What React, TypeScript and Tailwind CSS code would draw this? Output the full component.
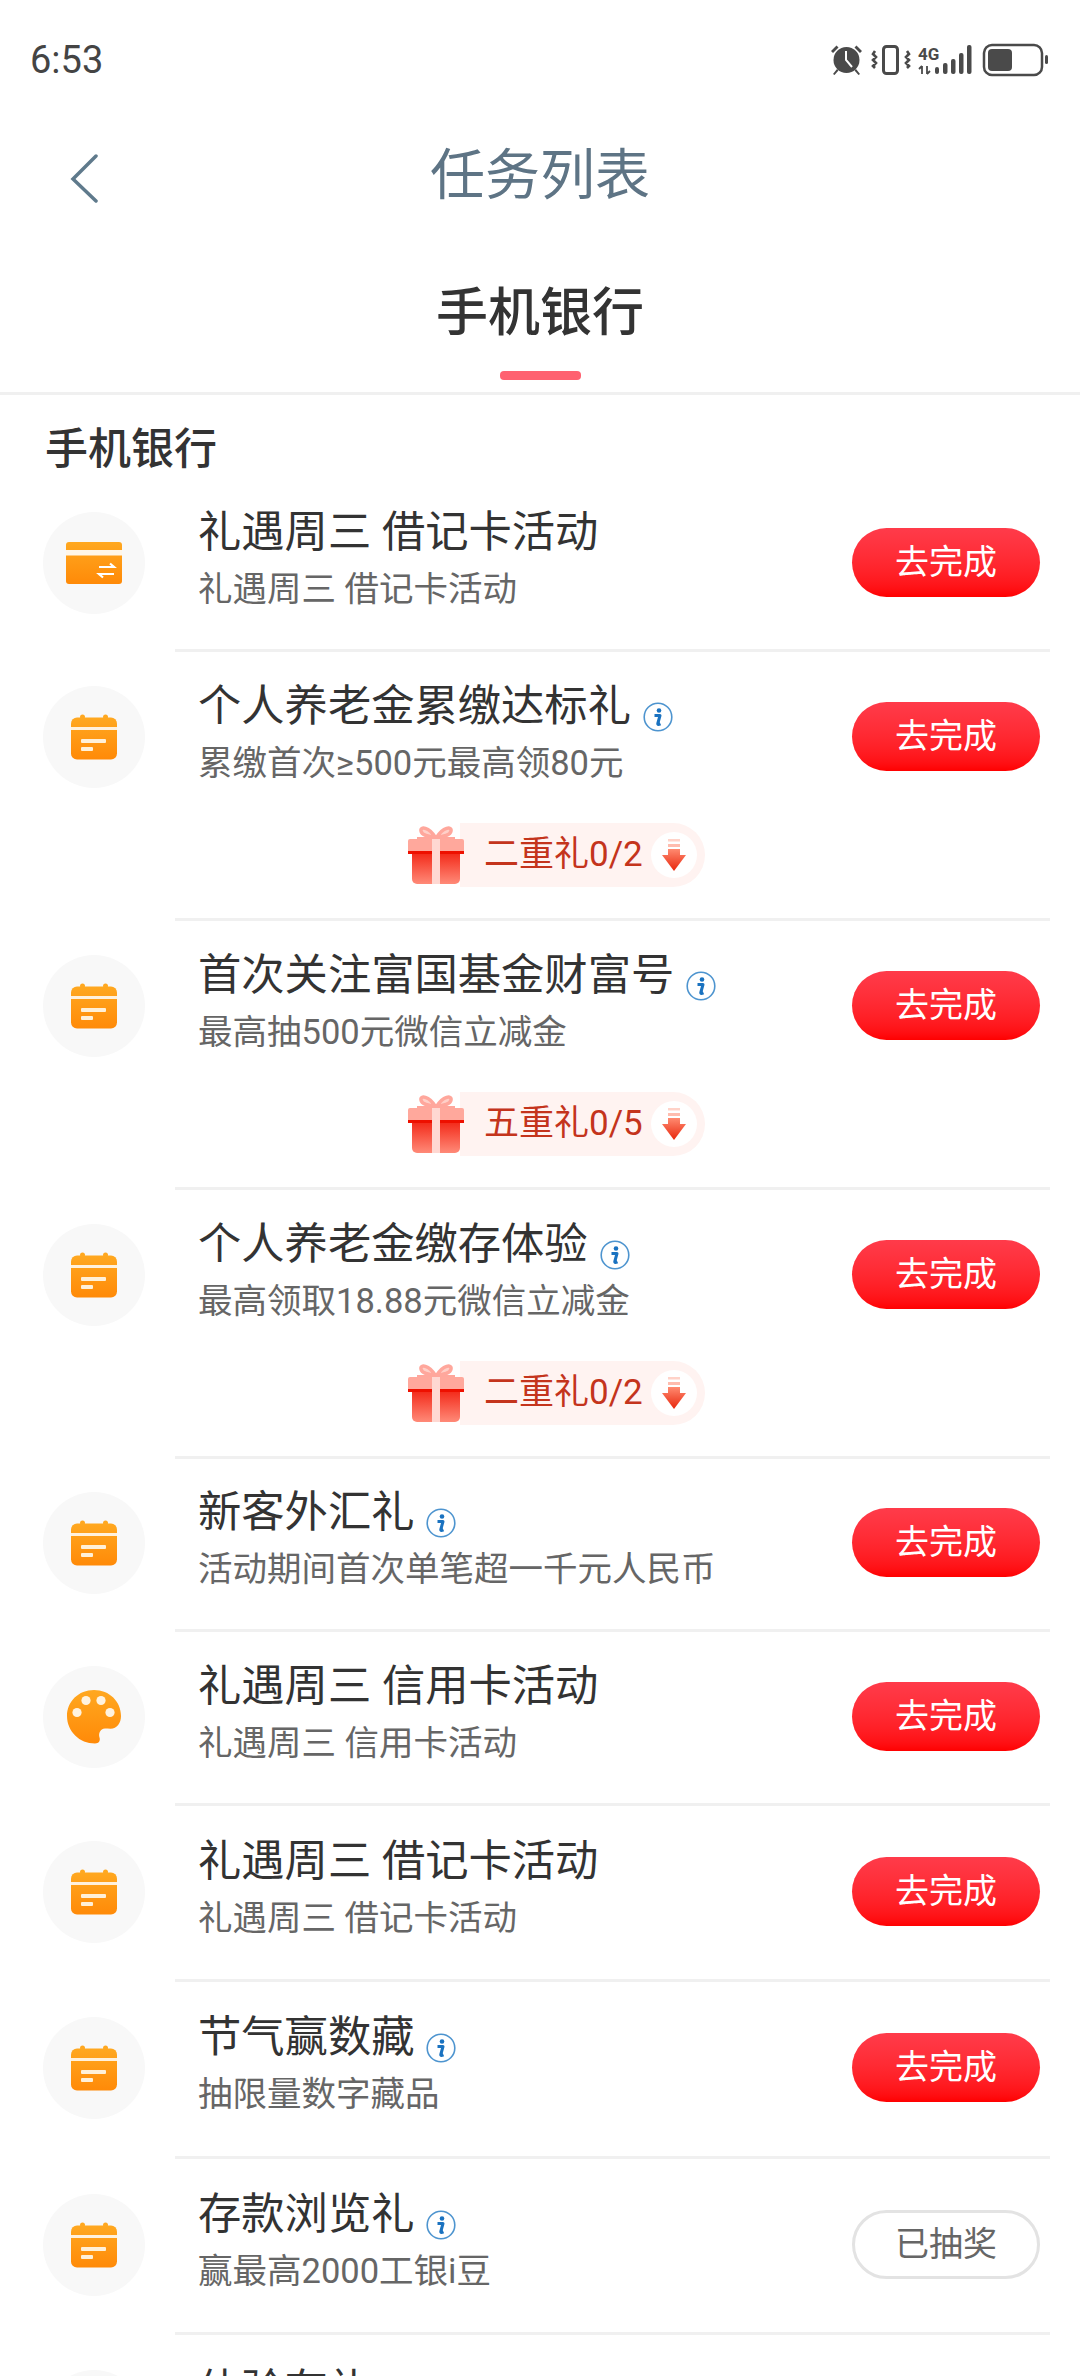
import React from "react";

type Row = {
  icon: "card" | "cal" | "palette";
  title: string;
  sub: string;
  info?: boolean;
  reward?: string;
  done?: boolean;
  h: string;
};

const rows: Row[] = [
  { icon: "card", title: "礼遇周三 借记卡活动", sub: "礼遇周三 借记卡活动", h: "h-[171px]" },
  { icon: "cal", title: "个人养老金累缴达标礼", sub: "累缴首次≥500元最高领80元", info: true, reward: "二重礼0/2", h: "h-[172px]" },
  { icon: "cal", title: "首次关注富国基金财富号", sub: "最高抽500元微信立减金", info: true, reward: "五重礼0/5", h: "h-[172px]" },
  { icon: "cal", title: "个人养老金缴存体验", sub: "最高领取18.88元微信立减金", info: true, reward: "二重礼0/2", h: "h-[172px]" },
  { icon: "cal", title: "新客外汇礼", sub: "活动期间首次单笔超一千元人民币", info: true, h: "h-[170px]" },
  { icon: "palette", title: "礼遇周三 信用卡活动", sub: "礼遇周三 信用卡活动", h: "h-[171px]" },
  { icon: "cal", title: "礼遇周三 借记卡活动", sub: "礼遇周三 借记卡活动", h: "h-[173px]" },
  { icon: "cal", title: "节气赢数藏", sub: "抽限量数字藏品", info: true, h: "h-[174px]" },
  { icon: "cal", title: "存款浏览礼", sub: "赢最高2000工银i豆", info: true, done: true, h: "h-[173px]" },
  { icon: "cal", title: "体验存礼", sub: "体验存礼", h: "h-[173px]" },
];

function Grad({ id }: { id: string }) {
  return (
    <defs>
      <linearGradient id={id} x1="0" y1="0" x2="0" y2="1">
        <stop offset="0" stopColor="#ffa820" />
        <stop offset="1" stopColor="#ff8a08" />
      </linearGradient>
    </defs>
  );
}

function TaskIcon({ kind, id }: { kind: Row["icon"]; id: string }) {
  if (kind === "card") {
    return (
      <svg width="56" height="44" viewBox="0 0 56 44">
        <Grad id={id} />
        <rect x="0" y="1" width="56" height="42" rx="3" fill={`url(#${id})`} />
        <rect x="0" y="9" width="56" height="5.5" fill="#ffffff" opacity="0.9" />
        <path d="M33 26h15l-4-3.5M48 33H33l4 3.5" fill="none" stroke="#fff" strokeWidth="2.2" />
      </svg>
    );
  }
  if (kind === "palette") {
    return (
      <svg width="56" height="56" viewBox="0 0 56 56">
        <Grad id={id} />
        <path
          d="M28 1C12.500 1 1 12.500 1 27c0 15.500 12.500 27.500 28 27.500 4 0 5.500-3 4.500-6-1.200-4 .5-8.500 5.500-9 2 0 3.500.2 5.500.2C51 39.700 55 34 55 27 55 12.500 43.500 1 28 1z"
          fill={`url(#${id})`}
        />
        <circle cx="20" cy="11.500" r="4.600" fill="#fff3df" />
        <circle cx="35" cy="11.500" r="4.600" fill="#fff3df" />
        <circle cx="11" cy="23.500" r="4.600" fill="#fff3df" />
        <circle cx="44" cy="23.500" r="4.600" fill="#fff3df" />
      </svg>
    );
  }
  return (
    <svg width="46" height="46" viewBox="0 0 46 46">
      <Grad id={id} />
      <circle cx="11.500" cy="3" r="2.500" fill="#ffa820" />
      <circle cx="34.500" cy="3" r="2.500" fill="#ffa820" />
      <rect x="0" y="3.500" width="46" height="42" rx="6" fill={`url(#${id})`} />
      <rect x="0" y="13" width="46" height="3" fill="#fff" opacity="0.85" />
      <rect x="10" y="25" width="25" height="4" rx="1" fill="#fff0d8" />
      <rect x="10" y="33" width="12" height="4" rx="1" fill="#fff0d8" />
    </svg>
  );
}

function Info() {
  return (
    <svg width="30" height="30" viewBox="0 0 30 30" className="shrink-0">
      <circle cx="15" cy="15" r="13.800" fill="#fff" stroke="#4d94cf" strokeWidth="1.600" />
      <circle cx="16" cy="8.500" r="2.300" fill="#1a72c0" />
      <path d="M11.500 13.500h5.500l-2.200 8c-.2 1 .5 1.300 2.700.3" fill="none" stroke="#1a72c0" strokeWidth="3" strokeLinejoin="round" />
    </svg>
  );
}

function Gift({ id }: { id: string }) {
  return (
    <svg width="58" height="60" viewBox="0 0 58 60" className="shrink-0 relative z-10">
      <defs>
        <linearGradient id={id} x1="0" y1="0" x2="0" y2="1">
          <stop offset="0" stopColor="#f01404" />
          <stop offset="1" stopColor="#ff8a78" />
        </linearGradient>
      </defs>
      <path d="M28 12C22 2 13 1 14 6c.5 4 8 6 14 6zM30 12c6-10 15-11 14-6-.5 4-8 6-14 6z" fill="#ffd0c8" stroke="#ffa79c" strokeWidth="3.500" />
      <path d="M10 13h38" stroke="#ffa79c" strokeWidth="2" />
      <rect x="5" y="21" width="48" height="38" rx="5" fill={`url(#${id})`} />
      <rect x="1" y="14" width="56" height="14" rx="2" fill="#ffa89c" />
      <rect x="1" y="26" width="56" height="3" fill="#ee1000" />
      <rect x="25" y="14" width="8" height="45" fill="#ffd8d2" />
    </svg>
  );
}

function Arrow({ id }: { id: string }) {
  return (
    <div className="w-[46px] h-[46px] rounded-full bg-white flex items-center justify-center">
      <svg width="24" height="32" viewBox="0 0 24 32">
        <defs>
          <linearGradient id={id} x1="0" y1="0" x2="0" y2="1">
            <stop offset="0" stopColor="#ff8a70" />
            <stop offset="1" stopColor="#e8260c" />
          </linearGradient>
        </defs>
        <rect x="6" y="0" width="12" height="2.500" fill="#ffd2c8" />
        <rect x="6" y="5" width="12" height="3" fill="#ffbcae" />
        <path d="M6 10h12v6h6L12 32 0 16h6z" fill={`url(#${id})`} />
      </svg>
    </div>
  );
}

function StatusIcons() {
  return (
    <svg width="220" height="36" viewBox="825 41 220 36">
      <g fill="#4a4a4a">
        <circle cx="843.500" cy="59" r="13" />
        <path d="M828 50l5.500-5.500 2 2-5.500 5.500zM859 50l-5.500-5.500-2 2 5.500 5.500z" />
        <path d="M834 68l-4 5 1.500 1 4-4.500zM853 68l4 5-1.500 1-4-4.500z" />
      </g>
      <path d="M843 50v9l6 7" fill="none" stroke="#fff" strokeWidth="2" />
      <rect x="880.500" y="45.500" width="14" height="27" rx="3" fill="none" stroke="#4a4a4a" strokeWidth="3" />
      <path d="M872 50l-2 3 3 3-3 3 3 3-3 3 2 2M904 50l2 3-3 3 3 3-3 3 3 3-2 2" fill="none" stroke="#4a4a4a" strokeWidth="2.600" />
      <text x="915" y="59" fontSize="17" fontWeight="700" fill="#4a4a4a" fontFamily="Roboto, sans-serif">4G</text>
      <path d="M919 65v8M924 73v-8M916 68l3-3M924 73l3-3" stroke="#4a4a4a" strokeWidth="1.800" fill="none" />
      <g fill="#4a4a4a">
        <rect x="932" y="66" width="4" height="7" rx="2" />
        <rect x="940" y="62" width="4.500" height="11" rx="2" />
        <rect x="948" y="58" width="4.500" height="15" rx="2" />
        <rect x="956" y="52" width="4.500" height="21" rx="2" />
        <rect x="964" y="44" width="4.500" height="29" rx="2" />
      </g>
      <rect x="981" y="44" width="58" height="30" rx="8" fill="none" stroke="#4a4a4a" strokeWidth="2.500" />
      <rect x="985" y="48" width="24" height="22" rx="4" fill="#4a4a4a" />
      <rect x="1042" y="54" width="3" height="9" rx="1.500" fill="#4a4a4a" />
    </svg>
  );
}

export default function App() {
  return (
    <div className="w-[1080px] h-[2376px] overflow-hidden bg-white font-['Roboto','Noto_Sans_CJK_SC',sans-serif]">
      <div className="h-[120px] flex items-center justify-between pl-[30px] pr-[32px]">
        <span className="text-[38px] text-[#444]">6:53</span>
        <StatusIcons />
      </div>

      <div className="h-[110px] relative flex items-center justify-center">
        <svg width="30" height="50" viewBox="0 0 30 50" className="absolute left-[69px] top-[33px]">
          <path d="M27 3 L4 26 L27 48" fill="none" stroke="#5f7a8c" strokeWidth="3.500" strokeLinecap="round" />
        </svg>
        <span className="text-[55px] leading-none text-[#5e7485]">任务列表</span>
      </div>

      <div className="h-[165px] flex flex-col items-center border-b-[3px] border-[#f0f0f0]">
        <span className="text-[52px] leading-none font-medium text-[#333] mt-[58px]">手机银行</span>
        <div className="w-[81px] h-[9px] rounded-[4px] bg-[#ff6170] mt-[31px]" />
      </div>

      <div className="h-[83px] pl-[45px] pt-[32px] text-[43px] leading-[44px] font-medium text-[#333]">手机银行</div>

      {rows.map((r, i) => (
        <div key={i}>
          <div className={`${r.h} flex items-center pl-[43px] pr-[40px]`}>
            <div className="w-[102px] h-[102px] mb-[2px] rounded-full bg-[#f8f8f8] flex items-center justify-center shrink-0">
              <TaskIcon kind={r.icon} id={`g${i}`} />
            </div>
            <div className="flex-1 min-w-0 pl-[53px] mb-[10px]">
              <div className="flex items-center gap-[12px] h-[52px]">
                <span className="text-[43.300px] leading-[52px] text-[#333] whitespace-nowrap">{r.title}</span>
                {r.info && <div className="mt-[20px]"><Info /></div>}
              </div>
              <div className="text-[34.500px] leading-[44px] text-[#666] mt-[8px] whitespace-nowrap">{r.sub}</div>
            </div>
            {r.done ? (
              <div className="w-[188px] h-[69px] mb-[3px] rounded-full border-[3px] border-[#e3e3e3] text-[#666] text-[34px] flex items-center justify-center shrink-0">已抽奖</div>
            ) : (
              <div className="w-[188px] h-[69px] mb-[3px] rounded-full bg-gradient-to-b from-[#ff3b4a] to-[#ff0000] text-white text-[34px] flex items-center justify-center shrink-0">去完成</div>
            )}
          </div>
          {r.reward && (
            <div className="h-[94px] flex justify-center pl-[32px]">
              <div className="h-[64px] -mt-[1px] flex items-center">
                <Gift id={`gift${i}`} />
                <div className="h-[64px] w-[245px] -ml-[5px] pl-[24px] pr-[8px] rounded-r-full bg-[#fff3f1] flex items-center justify-between">
                  <span className="text-[35px] text-[#c4341c] whitespace-nowrap">{r.reward}</span>
                  <Arrow id={`arrow${i}`} />
                </div>
              </div>
            </div>
          )}
          <div className="ml-[175px] mr-[30px] h-[3px] bg-[#f0f0f0]" />
        </div>
      ))}
    </div>
  );
}
